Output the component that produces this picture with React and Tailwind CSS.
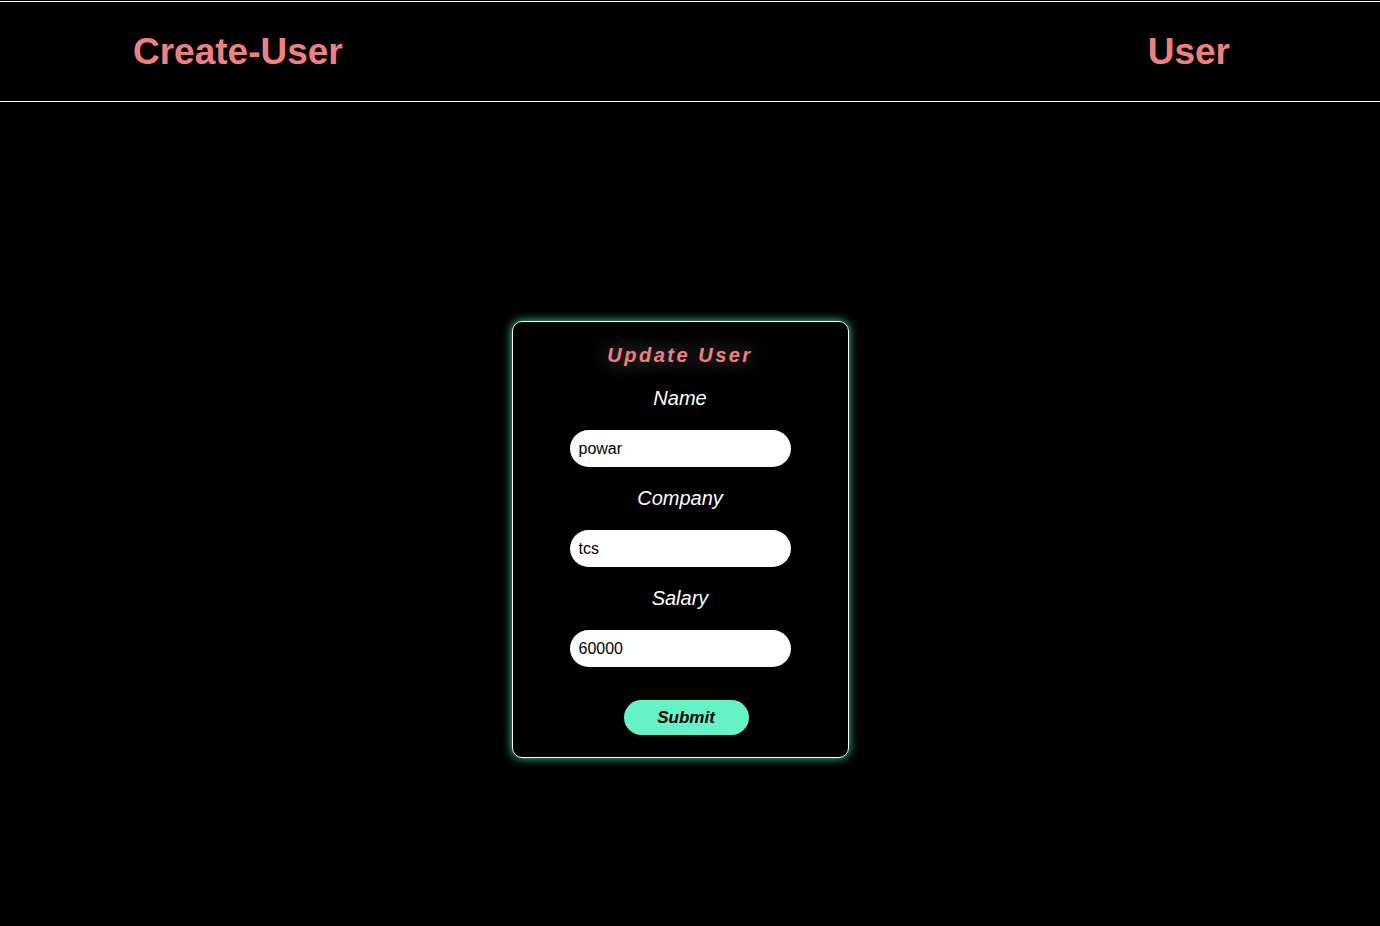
const FIELDS = [
  { label: "Name", value: "powar" },
  { label: "Company", value: "tcs" },
  { label: "Salary", value: "60000" },
];

const App = () => {
  return (
    <div className="min-h-screen bg-black font-['Liberation_Sans',Arial,sans-serif] pt-px">
      {/* Header */}
      <nav className="h-[101px] border-y border-white flex items-center justify-between pl-[133px] pr-[150px]">
        <a className="text-[37px] font-bold text-[#f08080] leading-none">Create-User</a>
        <a className="text-[37px] font-bold text-[#f08080] leading-none">User</a>
      </nav>

      {/* Form card */}
      <div className="flex justify-center pt-[219px] pr-[20px]">
        <form className="w-[337px] border border-white rounded-[10px] shadow-[0_0_10px_#3fd6a4] flex flex-col items-center pt-[22px] pb-[22px]">
          <h2 className="text-[20px] leading-[23px] font-bold italic tracking-[2.5px] text-[#f08080] [text-shadow:0_0_20px_rgba(200,200,200,0.6)]">
            Update User
          </h2>
          {FIELDS.map((f) => (
            <div key={f.label} className="flex flex-col items-center">
              <label className="text-[20px] leading-[23px] italic text-white mt-[20px] mb-[20px]">{f.label}</label>
              <input
                defaultValue={f.value}
                className="w-[221px] h-[37px] rounded-full bg-white text-black text-[16px] pl-[9px] outline-none"
              />
            </div>
          ))}
          <button
            type="button"
            className="mt-[33px] ml-[12px] w-[125px] h-[35px] rounded-full bg-[#66f2c6] text-black text-[17px] font-bold italic"
          >
            Submit
          </button>
        </form>
      </div>
    </div>
  );
};

export default App;
